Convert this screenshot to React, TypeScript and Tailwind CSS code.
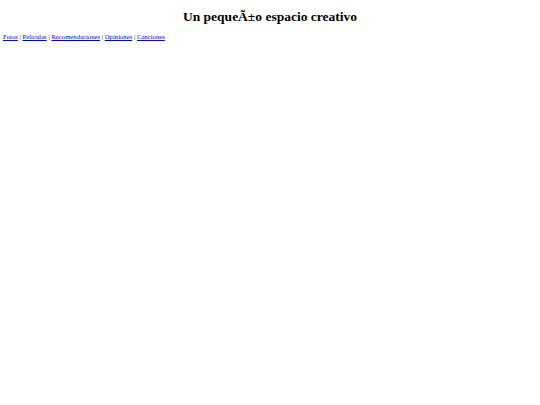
export default function App() {
  const links = ["Fotos", "Peliculas", "Recomendaciones", "Opiniones", "Canciones"];
  return (
    <div className="min-h-[405px] bg-white px-[3px] pt-[9px] font-['Liberation_Serif',serif] text-black">
      <h1 className="text-center text-[13.5px] font-bold leading-[15px]">Un pequeÃ±o espacio creativo</h1>
      <nav className="mt-[9px] text-[6.7px] leading-[8px]">
        {links.map((l, i) => (
          <span key={l}>
            {i > 0 && " | "}
            <a href="#" className="text-[#0000ee] underline">
              {l}
            </a>
          </span>
        ))}
      </nav>
    </div>
  );
}
